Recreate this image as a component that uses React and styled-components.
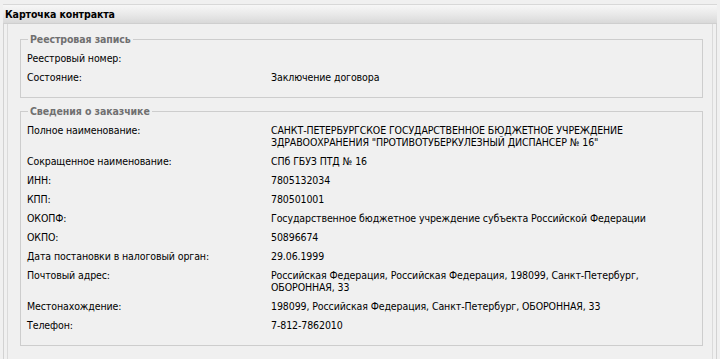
import React from "react";
import styled, { createGlobalStyle } from "styled-components";

const GlobalStyle = createGlobalStyle`
    html, body {
        margin: 0;
        padding: 0;
        background: #f0f0f0;
    }
    body {
        font-family: "DejaVu Sans Condensed", "DejaVu Sans", Tahoma, sans-serif;
        font-size: 10.5px;
        letter-spacing: -0.1px;
        color: #000;
    }
`;

const registry = [
    { label: "Реестровый номер:", value: "" },
    { label: "Состояние:", value: "Заключение договора" },
];

const customer = [
    {
        label: "Полное наименование:",
        value: "САНКТ-ПЕТЕРБУРГСКОЕ ГОСУДАРСТВЕННОЕ БЮДЖЕТНОЕ УЧРЕЖДЕНИЕ ЗДРАВООХРАНЕНИЯ \"ПРОТИВОТУБЕРКУЛЕЗНЫЙ ДИСПАНСЕР № 16\"",
    },
    { label: "Сокращенное наименование:", value: "СПб ГБУЗ ПТД № 16" },
    { label: "ИНН:", value: "7805132034" },
    { label: "КПП:", value: "780501001" },
    { label: "ОКОПФ:", value: "Государственное бюджетное учреждение субъекта Российской Федерации" },
    { label: "ОКПО:", value: "50896674" },
    { label: "Дата постановки в налоговый орган:", value: "29.06.1999" },
    {
        label: "Почтовый адрес:",
        value: "Российская Федерация, Российская Федерация, 198099, Санкт-Петербург, ОБОРОННАЯ, 33",
    },
    { label: "Местонахождение:", value: "198099, Российская Федерация, Санкт-Петербург, ОБОРОННАЯ, 33" },
    { label: "Телефон:", value: "7-812-7862010" },
];

const Section = ({ title, rows }) => (
    <Group>
        <Legend>{title}</Legend>
        {rows.map((r) => (
            <Row key={r.label}>
                <Label>{r.label}</Label>
                <Value>{r.value}</Value>
            </Row>
        ))}
    </Group>
);

const App = () => (
    <Page>
        <GlobalStyle />
        <Panel>
            <Header>Карточка контракта</Header>
            <Body>
                <Section title="Реестровая запись" rows={registry} />
                <Section title="Сведения о заказчике" rows={customer} />
            </Body>
        </Panel>
    </Page>
);

export default App;

const Page = styled.div`
    width: 720px;
    height: 359px;
    padding: 4px 3px 0 3px;
    box-sizing: border-box;
    overflow: hidden;
`;

const Panel = styled.div`
    height: 100%;
    border-left: 1px solid #d2d2d2;
    border-right: 1px solid #d2d2d2;
    box-shadow: inset 3px 0 0 #f0f0f0, inset 4px 0 0 #dadada, inset -3px 0 0 #f0f0f0, inset -4px 0 0 #dadada;
`;

const Header = styled.div`
    height: 20px;
    line-height: 19px;
    padding-left: 2px;
    margin: 0 -1px;
    border-top: 1px solid #d8d8d8;
    border-bottom: 1px solid #cfcfcf;
    background: linear-gradient(to bottom, #f7f7f7 0%, #ebebeb 45%, #d9d9d9 100%);
    font-weight: bold;
    box-sizing: border-box;
`;

const Body = styled.div`
    padding: 9px 13px 0 16px;
`;

const Group = styled.fieldset`
    margin: 0 0 7px 0;
    padding: 3px 0 11px 6px;
    border: 1px solid #cdcdcd;
    min-width: 0;
`;

const Legend = styled.legend`
    padding: 0 2px;
    margin-left: 1px;
    font-weight: bold;
    color: #707070;
    line-height: 12px;
`;

const Row = styled.div`
    display: grid;
    grid-template-columns: 244px 400px;
    padding: 4px 0 3px;
    line-height: 12px;
`;

const Label = styled.div`
    padding-right: 8px;
`;

const Value = styled.div``;
